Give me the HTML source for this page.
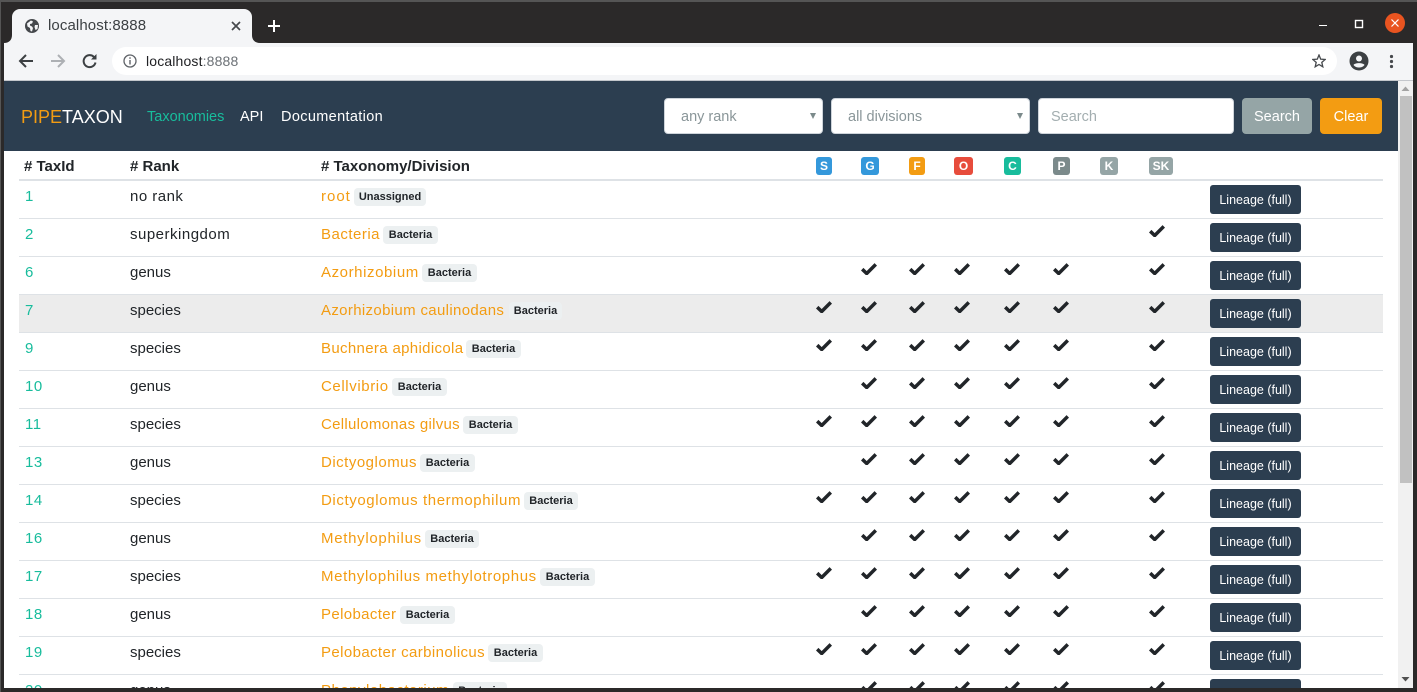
<!DOCTYPE html>
<html lang="en"><head><meta charset="utf-8"><title>localhost:8888</title>
<style>
*{box-sizing:border-box}
html,body{margin:0;padding:0;width:1417px;height:692px;overflow:hidden;background:#2b2929}
body{position:relative;font-family:"Liberation Sans",Arial,sans-serif;font-size:14.5px;color:#212529}
.abs,.abs2{position:absolute}
#top{left:0;top:0;width:1417px;height:2px;background:#555}
#toolbar{left:4px;top:43px;width:1409px;height:38px;background:#f4f5f7;border-bottom:1px solid #c4c7cc}
#tab{left:12px;top:9px;width:240px;height:34px;background:#f4f5f7;border-radius:8px 8px 0 0}
#omni{left:112px;top:47px;width:1225px;height:28px;background:#fff;border-radius:14px}
.t{position:absolute;white-space:nowrap}
#main{left:4px;top:81px;width:1394px;height:607px;background:#fff;overflow:hidden}
#nav{left:4px;top:81px;width:1394px;height:70px;background:#2c3e50}
.f{position:absolute;top:98px;height:36px;background:#fff;border:1px solid #ced4da;border-radius:4px;color:#8a9699;font-size:14.5px;line-height:36px;padding-left:16px;white-space:nowrap}
.f i{position:absolute;right:6px;top:14px;width:0;height:0;border-left:3px solid transparent;border-right:3px solid transparent;border-top:6px solid #7b8a8b}
.bn{position:absolute;top:98px;height:36px;border-radius:4px;color:#fff;text-align:center;line-height:38px;font-size:14.5px}
.h{position:absolute;top:158px;font-weight:bold;font-size:15px;line-height:18px;white-space:nowrap}
.hb{position:absolute;top:157px;height:18px;border-radius:3px;color:#fff;font-weight:bold;font-size:12px;line-height:18px;text-align:center}
#hl{left:19px;top:179px;width:1364px;height:2px;background:#dee2e6}
.r{position:absolute;left:19px;width:1364px;height:38px;border-bottom:1px solid #dee2e6}
.r .i,.r .k,.r .n{position:absolute;top:1px;line-height:30px;white-space:nowrap;font-size:15px}
.r .i{left:6px;color:#18bc9c;letter-spacing:.5px}
.r .k{left:111px}
.r .n{left:302px;color:#f39c12}
.r .b{position:absolute;top:7px;height:18px;background:#ecf0f1;border-radius:4px;font-size:11px;font-weight:bold;line-height:19px;text-align:center;color:#212529}
.r .l{position:absolute;left:1191px;top:4px;width:91px;height:29px;background:#2c3e50;border-radius:3px;color:#fff;font-size:12.5px;line-height:30px;text-align:center;white-space:nowrap}
.c{position:absolute;top:6px;width:16px;height:12px}
.c1{left:797px}.c2{left:842px}.c3{left:890px}.c4{left:935px}.c5{left:985px}.c6{left:1034px}.c7{left:1130px}
#sb{left:1398px;top:81px;width:15px;height:607px;background:#f1f1f1}
#thumb{left:1400px;top:96px;width:12px;height:387px;background:#c1c1c1}
#bot{left:0;top:688px;width:1417px;height:4px;background:#2b2929}
#lf{left:0;top:0;width:4px;height:692px;background:#2b2929;border-left:1px solid #555}
#rf{left:1413px;top:0;width:4px;height:692px;background:#2b2929}
</style></head><body>
<svg width="0" height="0" style="position:absolute"><defs><path id="k" d="M1.2 6.2L5.7 10.5L14.8 1.4" fill="none" stroke="#212529" stroke-width="3.5"/></defs></svg>

<div id="main" class="abs"></div>
<div id="nav" class="abs"></div>
<div class="t" style="left:21px;top:106px;font-size:18px;line-height:22px"><span style="color:#f39c12">PIPE</span><span style="color:#fff">TAXON</span></div>
<div class="t" style="left:147px;top:108px;color:#18bc9c;line-height:18px">Taxonomies</div>
<div class="t" style="left:240px;top:108px;color:#fff;line-height:18px">API</div>
<div class="t" style="left:281px;top:108px;color:#fff;line-height:18px;letter-spacing:.35px">Documentation</div>
<div class="f" style="left:664px;width:159px">any rank<i></i></div>
<div class="f" style="left:831px;width:199px">all divisions<i></i></div>
<div class="f" style="left:1038px;width:196px;color:#a3aeb0;padding-left:12px">Search</div>
<div class="bn" style="left:1242px;width:70px;background:#95a5a6">Search</div>
<div class="bn" style="left:1320px;width:62px;background:#f39c12">Clear</div>

<div class="h" style="left:24px"># TaxId</div>
<div class="h" style="left:130px"># Rank</div>
<div class="h" style="left:321px"># Taxonomy/Division</div>
<div class="hb" style="left:816px;width:16px;background:#3498db">S</div>
<div class="hb" style="left:861px;width:18px;background:#3498db">G</div>
<div class="hb" style="left:909px;width:16px;background:#f39c12">F</div>
<div class="hb" style="left:954px;width:19px;background:#e74c3c">O</div>
<div class="hb" style="left:1004px;width:17px;background:#18bc9c">C</div>
<div class="hb" style="left:1053px;width:17px;background:#7b8a8b">P</div>
<div class="hb" style="left:1100px;width:18px;background:#95a5a6">K</div>
<div class="hb" style="left:1149px;width:24px;background:#95a5a6">SK</div>
<div id="hl" class="abs"></div>

<div class="r" style="top:181px"><span class="i">1</span><span class="k" style="letter-spacing:.48px">no rank</span><span class="n" style="letter-spacing:1px">root</span><span class="b" style="left:335px;width:72px">Unassigned</span><span class="l">Lineage (full)</span></div>

<div class="r" style="top:219px"><span class="i">2</span><span class="k" style="letter-spacing:.5px">superkingdom</span><span class="n" style="letter-spacing:.5px">Bacteria</span><span class="b" style="left:364px;width:55px">Bacteria</span><svg class="c c7"><use href="#k"/></svg><span class="l">Lineage (full)</span></div>

<div class="r" style="top:257px"><span class="i">6</span><span class="k">genus</span><span class="n" style="letter-spacing:.58px">Azorhizobium</span><span class="b" style="left:403px;width:55px">Bacteria</span><svg class="c c2"><use href="#k"/></svg><svg class="c c3"><use href="#k"/></svg><svg class="c c4"><use href="#k"/></svg><svg class="c c5"><use href="#k"/></svg><svg class="c c6"><use href="#k"/></svg><svg class="c c7"><use href="#k"/></svg><span class="l">Lineage (full)</span></div>

<div class="r" style="top:295px;background:#ececec"><span class="i">7</span><span class="k">species</span><span class="n" style="letter-spacing:.34px">Azorhizobium caulinodans</span><span class="b" style="left:490px;width:53px">Bacteria</span><svg class="c c1"><use href="#k"/></svg><svg class="c c2"><use href="#k"/></svg><svg class="c c3"><use href="#k"/></svg><svg class="c c4"><use href="#k"/></svg><svg class="c c5"><use href="#k"/></svg><svg class="c c6"><use href="#k"/></svg><svg class="c c7"><use href="#k"/></svg><span class="l">Lineage (full)</span></div>

<div class="r" style="top:333px"><span class="i">9</span><span class="k">species</span><span class="n" style="letter-spacing:.34px">Buchnera aphidicola</span><span class="b" style="left:447px;width:55px">Bacteria</span><svg class="c c1"><use href="#k"/></svg><svg class="c c2"><use href="#k"/></svg><svg class="c c3"><use href="#k"/></svg><svg class="c c4"><use href="#k"/></svg><svg class="c c5"><use href="#k"/></svg><svg class="c c6"><use href="#k"/></svg><svg class="c c7"><use href="#k"/></svg><span class="l">Lineage (full)</span></div>

<div class="r" style="top:371px"><span class="i">10</span><span class="k">genus</span><span class="n" style="letter-spacing:.6px">Cellvibrio</span><span class="b" style="left:373px;width:55px">Bacteria</span><svg class="c c2"><use href="#k"/></svg><svg class="c c3"><use href="#k"/></svg><svg class="c c4"><use href="#k"/></svg><svg class="c c5"><use href="#k"/></svg><svg class="c c6"><use href="#k"/></svg><svg class="c c7"><use href="#k"/></svg><span class="l">Lineage (full)</span></div>

<div class="r" style="top:409px"><span class="i">11</span><span class="k">species</span><span class="n" style="letter-spacing:.29px">Cellulomonas gilvus</span><span class="b" style="left:444px;width:55px">Bacteria</span><svg class="c c1"><use href="#k"/></svg><svg class="c c2"><use href="#k"/></svg><svg class="c c3"><use href="#k"/></svg><svg class="c c4"><use href="#k"/></svg><svg class="c c5"><use href="#k"/></svg><svg class="c c6"><use href="#k"/></svg><svg class="c c7"><use href="#k"/></svg><span class="l">Lineage (full)</span></div>

<div class="r" style="top:447px"><span class="i">13</span><span class="k">genus</span><span class="n" style="letter-spacing:.5px">Dictyoglomus</span><span class="b" style="left:401px;width:55px">Bacteria</span><svg class="c c2"><use href="#k"/></svg><svg class="c c3"><use href="#k"/></svg><svg class="c c4"><use href="#k"/></svg><svg class="c c5"><use href="#k"/></svg><svg class="c c6"><use href="#k"/></svg><svg class="c c7"><use href="#k"/></svg><span class="l">Lineage (full)</span></div>

<div class="r" style="top:485px"><span class="i">14</span><span class="k">species</span><span class="n" style="letter-spacing:.6px">Dictyoglomus thermophilum</span><span class="b" style="left:505px;width:54px">Bacteria</span><svg class="c c1"><use href="#k"/></svg><svg class="c c2"><use href="#k"/></svg><svg class="c c3"><use href="#k"/></svg><svg class="c c4"><use href="#k"/></svg><svg class="c c5"><use href="#k"/></svg><svg class="c c6"><use href="#k"/></svg><svg class="c c7"><use href="#k"/></svg><span class="l">Lineage (full)</span></div>

<div class="r" style="top:523px"><span class="i">16</span><span class="k">genus</span><span class="n" style="letter-spacing:.7px">Methylophilus</span><span class="b" style="left:406px;width:54px">Bacteria</span><svg class="c c2"><use href="#k"/></svg><svg class="c c3"><use href="#k"/></svg><svg class="c c4"><use href="#k"/></svg><svg class="c c5"><use href="#k"/></svg><svg class="c c6"><use href="#k"/></svg><svg class="c c7"><use href="#k"/></svg><span class="l">Lineage (full)</span></div>

<div class="r" style="top:561px"><span class="i">17</span><span class="k">species</span><span class="n" style="letter-spacing:.62px">Methylophilus methylotrophus</span><span class="b" style="left:521px;width:55px">Bacteria</span><svg class="c c1"><use href="#k"/></svg><svg class="c c2"><use href="#k"/></svg><svg class="c c3"><use href="#k"/></svg><svg class="c c4"><use href="#k"/></svg><svg class="c c5"><use href="#k"/></svg><svg class="c c6"><use href="#k"/></svg><svg class="c c7"><use href="#k"/></svg><span class="l">Lineage (full)</span></div>

<div class="r" style="top:599px"><span class="i">18</span><span class="k">genus</span><span class="n" style="letter-spacing:.36px">Pelobacter</span><span class="b" style="left:381px;width:55px">Bacteria</span><svg class="c c2"><use href="#k"/></svg><svg class="c c3"><use href="#k"/></svg><svg class="c c4"><use href="#k"/></svg><svg class="c c5"><use href="#k"/></svg><svg class="c c6"><use href="#k"/></svg><svg class="c c7"><use href="#k"/></svg><span class="l">Lineage (full)</span></div>

<div class="r" style="top:637px"><span class="i">19</span><span class="k">species</span><span class="n" style="letter-spacing:.39px">Pelobacter carbinolicus</span><span class="b" style="left:469px;width:55px">Bacteria</span><svg class="c c1"><use href="#k"/></svg><svg class="c c2"><use href="#k"/></svg><svg class="c c3"><use href="#k"/></svg><svg class="c c4"><use href="#k"/></svg><svg class="c c5"><use href="#k"/></svg><svg class="c c6"><use href="#k"/></svg><svg class="c c7"><use href="#k"/></svg><span class="l">Lineage (full)</span></div>

<div class="r" style="top:675px"><span class="i">20</span><span class="k">genus</span><span class="n" style="letter-spacing:.5px">Phenylobacterium</span><span class="b" style="left:434px;width:54px">Bacteria</span><svg class="c c2"><use href="#k"/></svg><svg class="c c3"><use href="#k"/></svg><svg class="c c4"><use href="#k"/></svg><svg class="c c5"><use href="#k"/></svg><svg class="c c6"><use href="#k"/></svg><svg class="c c7"><use href="#k"/></svg><span class="l">Lineage (full)</span></div>

<div id="sb" class="abs"></div>
<div id="thumb" class="abs"></div>
<svg style="position:absolute;left:1398px;top:81px" width="15" height="607"><path d="M3.5 10L7.5 5.5L11.5 10Z" fill="#a3a3a3"/><path d="M3.5 596L7.5 600.5L11.5 596Z" fill="#505050"/></svg>
<div id="bot" class="abs"></div>
<div id="lf" class="abs"></div>
<div id="rf" class="abs"></div>

<div id="top" class="abs"></div>
<div id="toolbar" class="abs"></div>
<div id="tab" class="abs"></div>
<svg style="position:absolute;left:4px;top:35px" width="8" height="8"><path d="M0 8H8V0C8 5 5 8 0 8Z" fill="#f4f5f7"/></svg>
<svg style="position:absolute;left:252px;top:35px" width="8" height="8"><path d="M0 0V8H8C3 8 0 5 0 0Z" fill="#f4f5f7"/></svg>
<svg style="position:absolute;left:25px;top:19px" width="14" height="14" viewBox="0 0 14 14"><circle cx="7" cy="7" r="7" fill="#45484c"/><path d="M2 4.5C3.5 3.5 5 2 6 1.5L8 2.5 7 4.5 5 5 5 6.5 7 7.5 8 9 7 12.5 5.5 12 5 9 2.5 7.5ZM10 6H13L12.5 10 10.5 11 9.5 8Z" fill="#f4f5f7"/></svg>
<div class="t" style="left:48px;top:17px;font-size:15px;letter-spacing:.1px;line-height:18px;color:#3c4043">localhost:8888</div>
<svg style="position:absolute;left:231px;top:21px" width="10" height="10"><path d="M1 1L9 9M9 1L1 9" stroke="#45484c" stroke-width="1.7"/></svg>
<svg style="position:absolute;left:268px;top:20px" width="12" height="12"><path d="M6 0V12M0 6H12" stroke="#fff" stroke-width="2"/></svg>
<svg style="position:absolute;left:1318px;top:17px" width="84" height="20"><path d="M1 8.5H9" stroke="#fff" stroke-width="1"/><rect x="37.5" y="3.5" width="7" height="7" fill="none" stroke="#fff" stroke-width="1.4"/></svg>
<svg style="position:absolute;left:1385px;top:13px" width="20" height="20"><circle cx="10" cy="10" r="10" fill="#e95420"/><path d="M6.5 6.5L13.5 13.5M13.5 6.5L6.5 13.5" stroke="#fff" stroke-width="1.2"/></svg>

<div id="omni" class="abs"></div>
<svg style="position:absolute;left:18px;top:53px" width="16" height="16"><path d="M15 8H2M8 2L2 8L8 14" fill="none" stroke="#3c4043" stroke-width="2"/></svg>
<svg style="position:absolute;left:50px;top:53px" width="16" height="16"><path d="M1 8H14M8 2L14 8L8 14" fill="none" stroke="#adb0b4" stroke-width="2"/></svg>
<svg style="position:absolute;left:82px;top:53px" width="16" height="16"><path d="M13.5 9.5A6 6 0 1 1 12 4" fill="none" stroke="#3c4043" stroke-width="2"/><path d="M14.5 1V6.5H9Z" fill="#3c4043"/></svg>
<svg style="position:absolute;left:123px;top:54px" width="14" height="14"><circle cx="7" cy="7" r="6" fill="none" stroke="#5f6368" stroke-width="1.3"/><path d="M7 6V10.5" stroke="#5f6368" stroke-width="1.4"/><path d="M7 3.3V4.8" stroke="#5f6368" stroke-width="1.4"/></svg>
<div class="t" style="left:146px;top:52px;font-size:14px;letter-spacing:.15px;line-height:18px;color:#202124">localhost<span style="color:#6b7075">:8888</span></div>
<svg style="position:absolute;left:1312px;top:54px" width="14" height="14" viewBox="0 0 14 14"><path d="M7 1L8.7 5.1 13.2 5.5 9.8 8.4 10.8 12.8 7 10.5 3.2 12.8 4.2 8.4 .8 5.5 5.3 5.1Z" fill="none" stroke="#45484c" stroke-width="1.3"/></svg>
<svg style="position:absolute;left:1349px;top:51px" width="20" height="20"><circle cx="10" cy="10" r="9.5" fill="#3c4043"/><circle cx="10" cy="7.5" r="3" fill="#f4f5f7"/><path d="M4.5 14C6 11.5 14 11.5 15.5 14C14 16 12 16.5 10 16.5C8 16.5 6 16 4.5 14Z" fill="#f4f5f7"/></svg>
<svg style="position:absolute;left:1389px;top:54px" width="5" height="15"><circle cx="2.5" cy="2.5" r="1.6" fill="#45484c"/><circle cx="2.5" cy="7.5" r="1.6" fill="#45484c"/><circle cx="2.5" cy="12.5" r="1.6" fill="#45484c"/></svg>
</body></html>
